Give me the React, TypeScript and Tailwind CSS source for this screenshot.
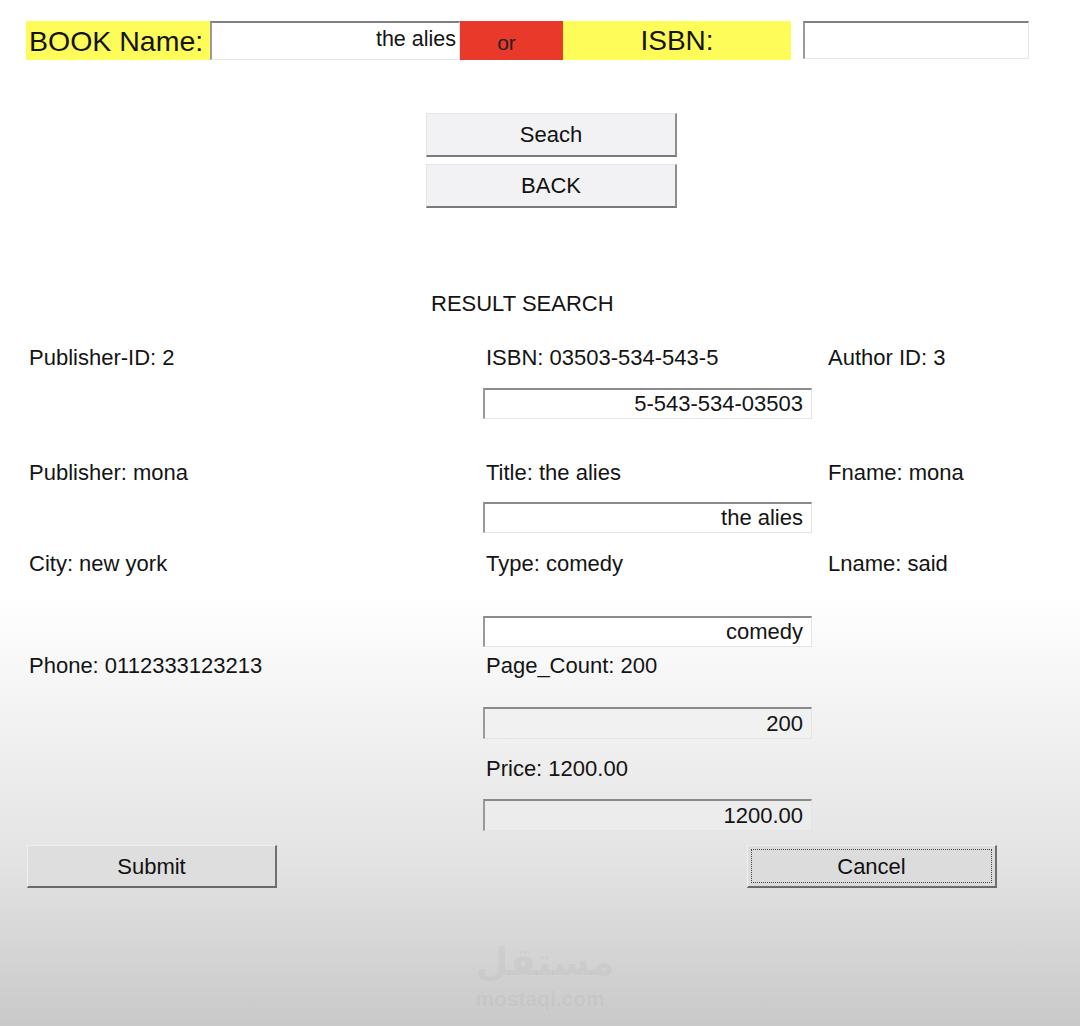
export default function App() {
  const inputBase =
    'block w-[329px] h-[31px] border-t-2 border-l-2 border-t-[#8a8a8a] border-l-[#9a9a9a] border-r border-b border-r-[#e4e4e4] border-b-[#e4e4e4] text-right pr-[8px] text-[22px] leading-[27px] outline-none';
  const raisedBtn =
    'w-[251px] h-[44px] bg-[#f2f1f4] border-t border-l border-t-[#e6e6e6] border-l-[#e6e6e6] border-r-2 border-b-2 border-r-[#8e8e8e] border-b-[#7a7a7a] text-[22px] text-[#111]';

  return (
    <div className="w-[1080px] h-[1026px] overflow-hidden bg-[linear-gradient(180deg,#ffffff_0%,#ffffff_58%,#e3e3e3_84%,#c9c9c9_100%)] font-['Liberation_Sans',Arial,sans-serif] text-[#141414]">
      {/* search bar */}
      <div className="flex pt-[21px] pl-[26px]">
        <div className="w-[184px] h-[39px] bg-[#fdfc58] pl-[3px] text-[28.5px] leading-[40px] whitespace-nowrap">BOOK Name:</div>
        <input
          readOnly
          value="the alies"
          className="w-[250px] h-[39px] bg-white border-t-2 border-l-2 border-t-[#808080] border-l-[#9a9a9a] border-r border-b border-r-[#e6e6e6] border-b-[#e6e6e6] text-right pr-[3px] pb-[4px] text-[21.5px] outline-none"
        />
        <div className="w-[103px] h-[39px] bg-[#e8392a] text-center pr-[10px] pt-[2px] text-[21px] leading-[39px] text-[#222]">or</div>
        <div className="w-[228px] h-[39px] bg-[#fdfc58] text-center text-[28px] leading-[40px]">ISBN:</div>
        <input
          readOnly
          value=""
          className="ml-[12px] w-[226px] h-[38px] bg-white border-t-2 border-l-2 border-t-[#808080] border-l-[#9a9a9a] border-r border-b border-r-[#e6e6e6] border-b-[#e6e6e6] outline-none"
        />
      </div>

      <div className="flex flex-col gap-[7px] pl-[426px] mt-[53px]">
        <button className={raisedBtn}>Seach</button>
        <button className={raisedBtn}>BACK</button>
      </div>

      <div className="mt-[84px] pl-[431px] text-[22px] leading-[24px]">RESULT SEARCH</div>

      {/* result grid */}
      <div className="pl-[29px] text-[22px] leading-[24px]">
        <div className="grid grid-cols-[454px_345px_1fr] mt-[30px]">
          <div>Publisher-ID: 2</div>
          <div>
            <div className="pl-[3px]">ISBN: 03503-534-543-5</div>
            <input readOnly value="5-543-534-03503" className={`${inputBase} mt-[18px] bg-white`} />
          </div>
          <div>Author ID: 3</div>
        </div>

        <div className="grid grid-cols-[454px_345px_1fr] mt-[42px]">
          <div>Publisher: mona</div>
          <div>
            <div className="pl-[3px]">Title: the alies</div>
            <input readOnly value="the alies" className={`${inputBase} mt-[17px] bg-white`} />
          </div>
          <div>Fname: mona</div>
        </div>

        <div className="grid grid-cols-[454px_345px_1fr] mt-[19px]">
          <div>City: new york</div>
          <div>
            <div className="pl-[3px]">Type: comedy</div>
            <input readOnly value="comedy" className={`${inputBase} mt-[40px] bg-white`} />
          </div>
          <div>Lname: said</div>
        </div>

        <div className="grid grid-cols-[454px_345px_1fr] mt-[7px]">
          <div>Phone: 0112333123213</div>
          <div>
            <div className="pl-[3px]">Page_Count: 200</div>
            <input readOnly value="200" className={`${inputBase} mt-[29px] h-[32px] bg-[#f1f1f1]`} />
          </div>
          <div />
        </div>

        <div className="grid grid-cols-[454px_345px_1fr] mt-[18px]">
          <div />
          <div>
            <div className="pl-[3px]">Price: 1200.00</div>
            <input readOnly value="1200.00" className={`${inputBase} mt-[18px] h-[32px] bg-[#ececec]`} />
          </div>
          <div />
        </div>
      </div>

      <div className="flex pl-[27px] mt-[14px]">
        <button className="w-[250px] h-[43px] bg-[#dedede] border-t border-l border-t-[#f0f0f0] border-l-[#f0f0f0] border-r-2 border-b-2 border-r-[#707070] border-b-[#6a6a6a] text-[22px] text-[#111]">
          Submit
        </button>
        <button className="ml-[470px] w-[250px] h-[43px] p-[3px] bg-[#dcdcdc] border-t border-l border-t-[#efefef] border-l-[#efefef] border-r-2 border-b-2 border-r-[#707070] border-b-[#6a6a6a] text-[22px] text-[#111]">
          <div className="h-full w-full flex items-center justify-center border border-dotted border-[#444]">Cancel</div>
        </button>
      </div>

      {/* watermark */}
      <div className="mt-[52px] flex flex-col items-center gap-[4px] text-black/5">
        <div className="font-['DejaVu_Sans',sans-serif] font-bold text-[38px] leading-[44px] pl-[10px]">مستقل</div>
        <div className="text-[21px] leading-[22px] font-bold">mostaql.com</div>
      </div>
    </div>
  );
}
